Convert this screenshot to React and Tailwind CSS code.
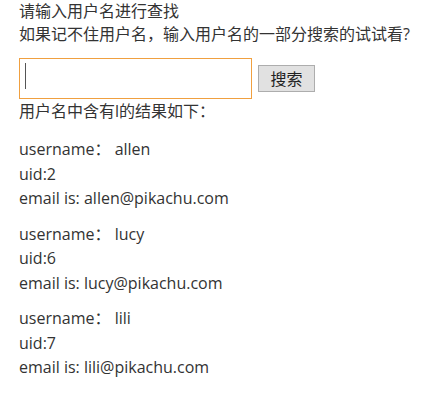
export default function App() {
  const users = [
    { name: "allen", uid: 2, email: "allen@pikachu.com" },
    { name: "lucy", uid: 6, email: "lucy@pikachu.com" },
    { name: "lili", uid: 7, email: "lili@pikachu.com" },
  ];
  return (
    <div
      className="bg-white w-[439px] h-[407px] pl-[19px] text-[16px] leading-[23px] text-[#333]"
      style={{ fontFamily: '"Open Sans", "Noto Sans CJK SC", sans-serif' }}
    >
      <p>请输入用户名进行查找</p>
      <p>如果记不住用户名，输入用户名的一部分搜索的试试看?</p>
      <div className="flex items-center gap-[6px] mt-[12px]">
        <div className="relative w-[233px] h-[41px] border border-[#f0a040] bg-white">
          <div className="absolute left-[5px] top-[4px] w-px h-[26px] bg-[#555]" />
        </div>
        <button className="w-[57px] h-[27px] bg-[#e1e1e1] border border-[#adadad] text-[16px] leading-none text-[#222]">
          搜索
        </button>
      </div>
      <p className="mt-[1px]">用户名中含有l的结果如下：</p>
      <div className="mt-[14px] leading-[24.5px]">
        {users.map((u) => (
          <div key={u.name} className="mb-[11px]">
            <p>username：&nbsp;{u.name}</p>
            <p>uid:{u.uid}</p>
            <p>email is: {u.email}</p>
          </div>
        ))}
      </div>
    </div>
  );
}
